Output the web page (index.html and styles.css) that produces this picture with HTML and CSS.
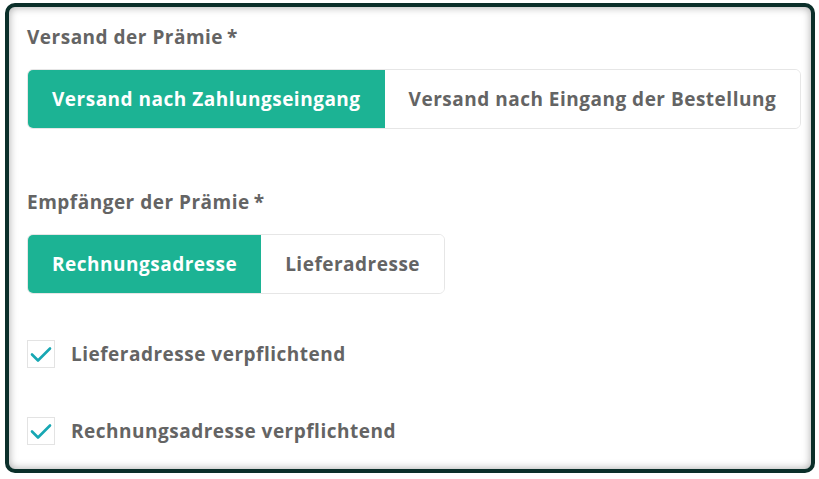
FILE: index.html
```html
<!DOCTYPE html>
<html lang="de">
<head>
    <meta charset="UTF-8">
    <title>Prämie</title>
    <link rel="stylesheet" href="styles.css">
</head>
<body>
    <div class="frame">
        <div class="field">
            <div class="label">Versand der Prämie<span class="req">*</span></div>
            <div class="toggle">
                <button class="active">Versand nach Zahlungseingang</button>
                <button>Versand nach Eingang der Bestellung</button>
            </div>
        </div>

        <div class="field second">
            <div class="label">Empfänger der Prämie<span class="req">*</span></div>
            <div class="toggle">
                <button class="active">Rechnungsadresse</button>
                <button>Lieferadresse</button>
            </div>
        </div>

        <label class="check">
            <span class="box">
                <svg viewBox="0 0 24 24"><path d="M3 12.5l6 6L21 6.5" /></svg>
            </span>
            Lieferadresse verpflichtend
        </label>

        <label class="check">
            <span class="box">
                <svg viewBox="0 0 24 24"><path d="M3 12.5l6 6L21 6.5" /></svg>
            </span>
            Rechnungsadresse verpflichtend
        </label>
    </div>
</body>
</html>
```

FILE: styles.css
```css
body {
    margin: 0;
    background: #fff;
    font-family: "Open Sans", sans-serif;
    font-weight: 700;
    color: #646464;
}

.frame {
    box-sizing: border-box;
    width: 810px;
    height: 470px;
    margin: 3px 0 0 5px;
    border: 4px solid #0b2f2a;
    border-radius: 10px;
    box-shadow: inset 0 0 8px rgba(0, 0, 0, 0.35);
    padding: 18px 8px 0 18px;
}

.label {
    font-size: 19px;
    line-height: 24px;
    letter-spacing: 0.5px;
}

.req {
    margin-left: 4px;
}

.toggle {
    display: inline-flex;
    margin-top: 20px;
    border: 1px solid #e6e6e6;
    border-radius: 6px;
    overflow: hidden;
}

.toggle button {
    font-family: inherit;
    font-weight: 700;
    font-size: 19px;
    letter-spacing: 0.5px;
    color: #646464;
    background: #fff;
    border: none;
    height: 58px;
    padding: 0 24px;
}

.toggle button.active {
    background: #1cb394;
    color: #fff;
}

.second {
    margin-top: 61px;
}

.check {
    display: flex;
    align-items: center;
    gap: 16px;
    font-size: 19px;
    letter-spacing: 0.5px;
    margin-top: 46px;
}

.check + .check {
    margin-top: 49px;
}

.box {
    box-sizing: border-box;
    width: 28px;
    height: 28px;
    border: 1px solid #e3e3e3;
    display: flex;
    align-items: center;
    justify-content: center;
}

.box svg {
    width: 24px;
    height: 24px;
    fill: none;
    stroke: #17a7b3;
    stroke-width: 2.6;
    stroke-linecap: round;
    stroke-linejoin: round;
}
```
